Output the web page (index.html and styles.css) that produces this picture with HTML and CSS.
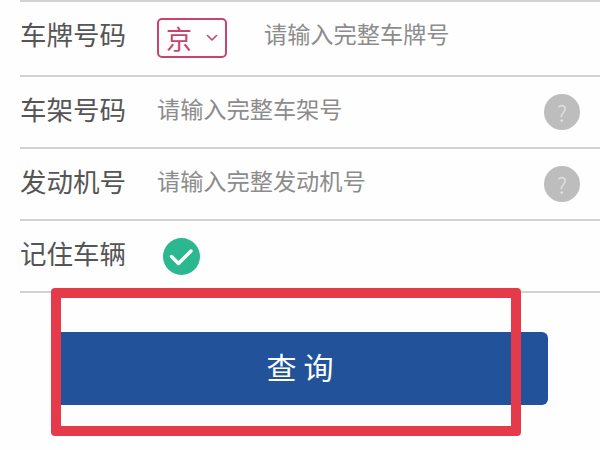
FILE: index.html
```html
<!DOCTYPE html>
<html lang="zh">
<head>
<meta charset="utf-8">
<title>车辆查询</title>
<link rel="stylesheet" href="styles.css">
</head>
<body>
<main class="page">
  <form class="form">
    <div class="row row-first">
      <span class="label">车牌号码</span>
      <span class="plate">
        <span class="plate-text">京</span>
        <svg class="chevron" viewBox="0 0 12 8" aria-hidden="true"><path d="M1.5 1.5 L6 6 L10.5 1.5" fill="none" stroke="#c9436f" stroke-width="1.6" stroke-linecap="round" stroke-linejoin="round"/></svg>
      </span>
      <span class="placeholder placeholder-plate">请输入完整车牌号</span>
    </div>
    <div class="row">
      <span class="label">车架号码</span>
      <span class="placeholder">请输入完整车架号</span>
      <span class="help">?</span>
    </div>
    <div class="row">
      <span class="label">发动机号</span>
      <span class="placeholder">请输入完整发动机号</span>
      <span class="help">?</span>
    </div>
    <div class="row">
      <span class="label">记住车辆</span>
      <svg class="check" viewBox="0 0 37 37" aria-hidden="true"><circle cx="18.5" cy="18.5" r="18.5" fill="#2bb890"/><path d="M8.5 18.5 L15.5 25.5 L28 13" fill="none" stroke="#fff" stroke-width="3.4" stroke-linecap="round" stroke-linejoin="round"/></svg>
    </div>
  </form>
  <div class="actions">
    <button class="submit" type="button">查询</button>
  </div>
  <div class="highlight"></div>
</main>
</body>
</html>
```

FILE: styles.css
```css
html, body {
  margin: 0;
  padding: 0;
  background: #fefefe;
}

.page {
  position: relative;
  width: 600px;
  height: 450px;
  overflow: hidden;
  font-family: "Noto Sans CJK SC", "Noto Sans", sans-serif;
}

.form {
  margin-left: 20px;
  border-top: 2px solid #d2d2d2;
}

.row {
  display: flex;
  align-items: center;
  box-sizing: border-box;
  height: 72px;
  border-bottom: 2px solid #d2d2d2;
}

.row-first {
  height: 75px;
}

.label {
  width: 137px;
  box-sizing: border-box;
  flex: none;
  font-size: 26.5px;
  color: #555;
  margin-bottom: 8px;
}

.row-first .label {
  margin-bottom: 10px;
}

.placeholder {
  font-size: 23.2px;
  color: #8c8c8c;
  flex: 1;
  margin-bottom: 8px;
}

.placeholder-plate {
  margin-left: 37px;
  margin-bottom: 12px;
}

.plate {
  display: flex;
  align-items: center;
  box-sizing: border-box;
  width: 70px;
  height: 40px;
  border: 2px solid #c9436f;
  border-radius: 5px;
  padding-left: 7px;
  margin-bottom: 2px;
  flex: none;
}

.plate-text {
  font-size: 26px;
  line-height: 1;
  color: #c9436f;
}

.chevron {
  width: 12px;
  height: 8px;
  margin-left: 14px;
}

.help {
  display: flex;
  align-items: center;
  justify-content: center;
  width: 36px;
  height: 36px;
  margin-right: 20px;
  border-radius: 50%;
  background: #bdbdbd;
  color: #e4e4e4;
  font-size: 22px;
  font-weight: 300;
  line-height: 1;
  flex: none;
}

.check {
  width: 37px;
  height: 37px;
  margin-left: 6px;
  flex: none;
}

.actions {
  padding: 39px 52px 0;
}

.submit {
  display: block;
  width: 100%;
  height: 73px;
  border: 0;
  border-radius: 6px;
  background: #22539a;
  color: #fff;
  font-family: inherit;
  font-size: 30px;
  letter-spacing: 7px;
  padding: 0 0 6px 7px;
}

.highlight {
  position: absolute;
  left: 51px;
  top: 288px;
  box-sizing: border-box;
  width: 470px;
  height: 148px;
  border: 10px solid #e43a4a;
  border-radius: 4px;
}
```
